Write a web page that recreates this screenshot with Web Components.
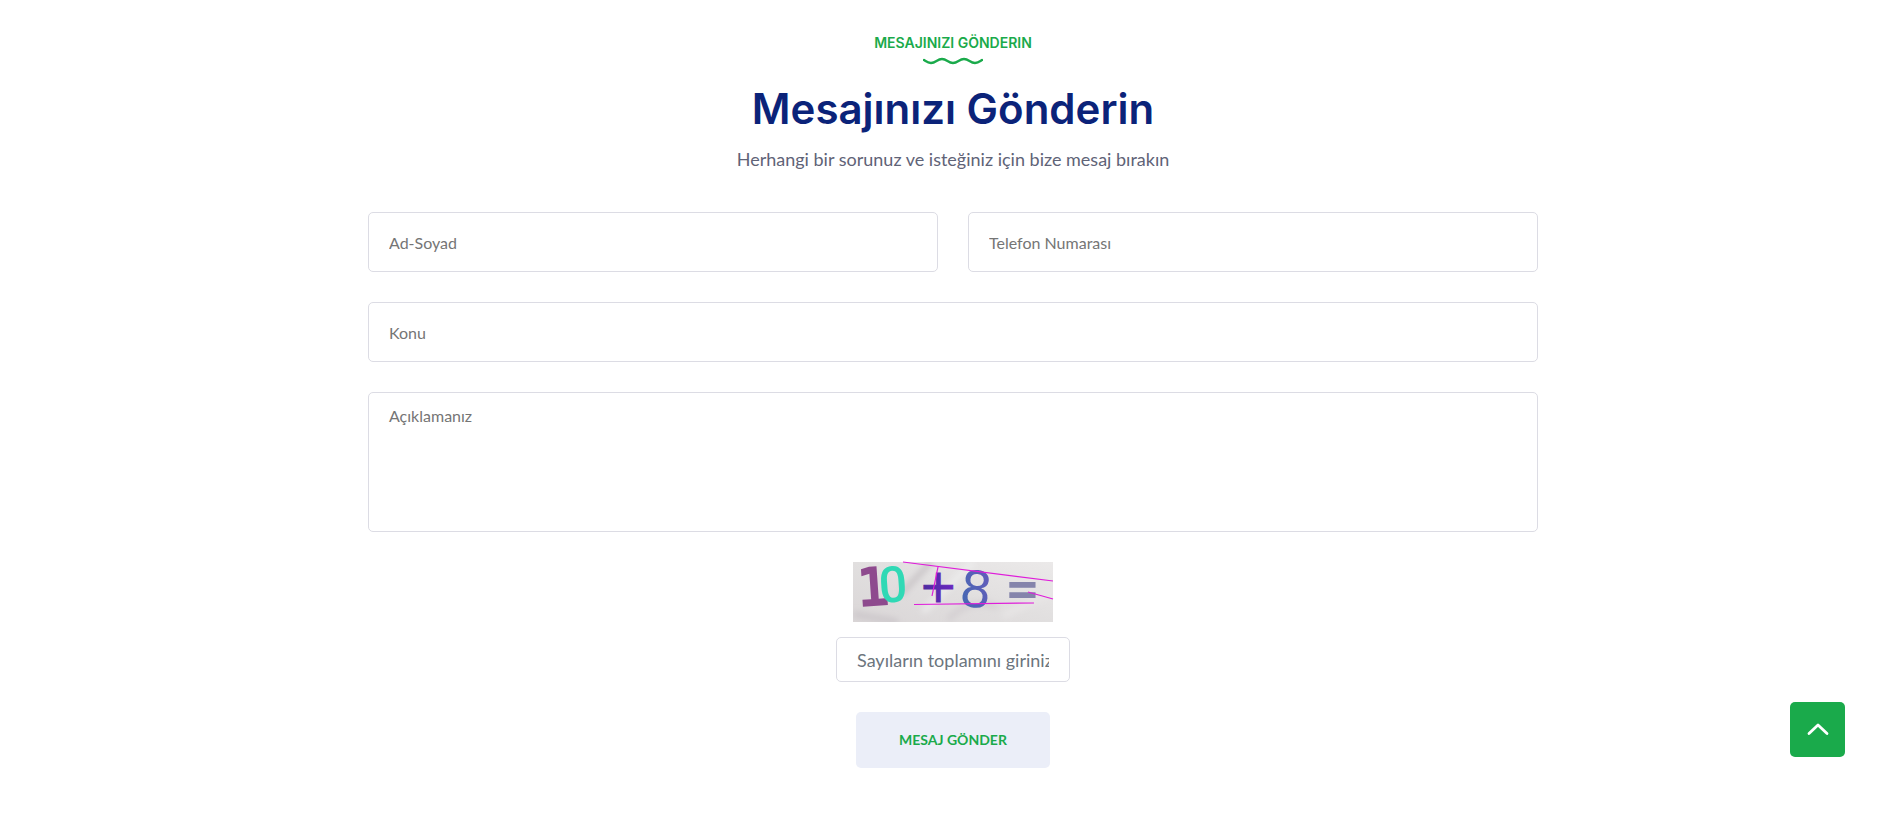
<!DOCTYPE html>
<html lang="tr">
<head>
<meta charset="utf-8">
<meta name="viewport" content="width=device-width, initial-scale=1">
<title>Mesajınızı Gönderin</title>
<style>
body { margin: 0; background: #fff; color: #5f6377; font-family: Lato, "Noto Sans", sans-serif; font-size: 18px; }
</style>
</head>
<body>
<contact-section>
  <section-heading>
    <span slot="eyebrow">MESAJINIZI GÖNDERIN</span>
    <span slot="title">Mesajınızı Gönderin</span>
    <span slot="lead">Herhangi bir sorunuz ve isteğiniz için bize mesaj bırakın</span>
  </section-heading>
  <contact-form></contact-form>
</contact-section>
<scroll-top></scroll-top>
<script>
const define = (name, html) => {
  const template = document.createElement('template');
  template.innerHTML = html;
  customElements.define(name, class extends HTMLElement {
    constructor() {
      super();
      this.attachShadow({ mode: 'open' }).append(template.content.cloneNode(true));
      const control = this.shadowRoot.querySelector('[data-control]');
      if (control) {
        control.placeholder = this.getAttribute('placeholder') || '';
        control.setAttribute('aria-label', control.placeholder);
      }
    }
  });
};

define('contact-section', `
<style>
:host { display: block; padding: 32px 24px 45px 28px; }
main { max-width: 1170px; margin: 0 auto; }
</style>
<main><slot></slot></main>`);

define('section-heading', `
<style>
:host { display: flex; flex-direction: column; align-items: center; text-align: center; margin-bottom: 38px; }
p, h2 { margin: 0; }
.eyebrow { font: 600 14px/22px Inter, sans-serif; color: #1aaa4b; }
svg { display: block; width: 60px; height: 8px; margin: 3px 0 20px; }
h2 { font: 600 42px/48px Inter, sans-serif; color: #0b2379; }
.lead { font-size: 18px; line-height: 30px; margin-top: 11px; }
</style>
<p class="eyebrow"><slot name="eyebrow"></slot></p>
<svg viewBox="0 0 60 8" fill="none" stroke="#1aaa4b" stroke-width="2.300" stroke-linecap="round" aria-hidden="true"><path d="M1 3C4 5 5 6 8 6C13 6 14 2 19 2C24 2 25 6 30 6C35 6 36 2 41 2C46 2 47 6 52 6C55 6 56 5 59 3"/></svg>
<h2><slot name="title"></slot></h2>
<p class="lead"><slot name="lead"></slot></p>`);

const fieldStyle = `
:host { display: block; }
input, textarea {
  display: block; box-sizing: border-box; width: 100%; margin: 0;
  border: 1px solid #dcdce4; border-radius: 5px; background: #fff;
  font-family: inherit; font-size: 16px; line-height: 24px; color: #5f6377; outline: none; resize: none;
}
::placeholder { color: #757575; opacity: 1; }
input:focus, textarea:focus { border-color: #1aaa4b; }`;

define('text-field', `<style>${fieldStyle}
input { height: 60px; padding: 1px 20px 0; }</style><input type="text" data-control>`);

define('text-area-field', `<style>${fieldStyle}
textarea { height: 140px; padding: 11px 20px; }</style><textarea data-control></textarea>`);

define('answer-field', `<style>${fieldStyle}
:host { width: 234px; }
input { height: 45px; padding: 1px 20px 0; font-size: 18px; }
::placeholder { color: #6c757d; }</style><input type="text" data-control>`);

define('captcha-image', `
<style>
:host { display: block; width: 200px; height: 60px; }
svg { display: block; overflow: visible; }
</style>
<svg width="200" height="60" viewBox="0 0 200 60" role="img" aria-label="10 + 8 =">
  <defs>
    <clipPath id="frame"><rect width="200" height="60"/></clipPath>
    <filter id="soft" x="-20%" y="-20%" width="140%" height="140%"><feGaussianBlur stdDeviation="3"/></filter>
    <linearGradient id="paper" x1="0" y1="1" x2="1" y2="0"><stop offset="0" stop-color="#dad6d7"/><stop offset=".5" stop-color="#e1dfdf"/><stop offset="1" stop-color="#ebe9e9"/></linearGradient>
    <linearGradient id="plus" x1="0" x2="1"><stop offset="0" stop-color="#4a2d9c"/><stop offset="1" stop-color="#6d27c4"/></linearGradient>
    <linearGradient id="eight" x1="0" y1="1" x2="1" y2="0"><stop offset="0" stop-color="#3d6cb0"/><stop offset="1" stop-color="#6a58bd"/></linearGradient>
  </defs>
  <rect width="200" height="60" fill="url(#paper)"/>
  <g clip-path="url(#frame)"><g filter="url(#soft)" fill="none" stroke-width="5">
    <path d="M78 0L48 32" stroke="#c6c1c4"/><path d="M0 52L45 60" stroke="#c9c4c8"/>
    <path d="M95 58Q115 35 145 45" stroke="#d2cdd0"/><path d="M120 0L70 50" stroke="#eeeeee"/>
    <path d="M150 54L200 30" stroke="#e9e7e7"/>
  </g></g>
  <text transform="translate(5 45) rotate(-4)" font-family="DejaVu Sans Mono" font-weight="700" font-size="54" fill="#8e4a8e">1</text>
  <text transform="translate(27 41) rotate(-4)" font-family="Roboto" font-weight="500" font-size="50" fill="#30d9b5">0</text>
  <text x="66" y="40" font-family="DejaVu Sans" font-size="46" fill="url(#plus)" stroke="url(#plus)" stroke-width="1">+</text>
  <text transform="translate(105 43) rotate(7)" font-family="DejaVu Sans" font-size="50" fill="url(#eight)">8</text>
  <text x="154" y="47" font-family="Open Sans" font-weight="700" font-size="54" fill="#8584ab">=</text>
  <g stroke="#df1cda" stroke-width="1.200" fill="none"><path d="M50 0L200 19"/><path d="M61 42.500L181 41"/><path d="M85 5L79 34"/><path d="M175 30L200 37"/></g>
</svg>`);

define('submit-button', `
<style>
:host { display: block; }
button { box-sizing: border-box; height: 56px; padding: 0 43px; border: 0; border-radius: 5px; background: #ebeef8; color: #1aaa4b; font: 700 14px/24px Lato, sans-serif; cursor: pointer; }
</style>
<button type="submit"><slot></slot></button>`);

define('contact-form', `
<style>
:host { display: block; }
form { display: grid; grid-template-columns: 1fr 1fr; gap: 30px; }
.wide { grid-column: 1 / -1; }
.captcha { display: flex; flex-direction: column; align-items: center; gap: 15px; }
submit-button { justify-self: center; }
</style>
<form>
  <text-field placeholder="Ad-Soyad"></text-field>
  <text-field placeholder="Telefon Numarası"></text-field>
  <text-field class="wide" placeholder="Konu"></text-field>
  <text-area-field class="wide" placeholder="Açıklamanız"></text-area-field>
  <div class="wide captcha"><captcha-image></captcha-image><answer-field placeholder="Sayıların toplamını giriniz"></answer-field></div>
  <submit-button class="wide">MESAJ GÖNDER</submit-button>
</form>`);

define('scroll-top', `
<style>
:host { position: fixed; right: 57px; bottom: 57px; }
button { display: grid; place-items: center; width: 55px; height: 55px; padding: 0; border: 0; border-radius: 5px; background: #1aaa4b; cursor: pointer; }
</style>
<button type="button" aria-label="Yukarı çık"><svg width="22" height="14" viewBox="0 0 22 14" fill="none" stroke="#fff" stroke-width="2.800" stroke-linecap="round" stroke-linejoin="round"><path d="M2 10.500L11 2L20 10.500"/></svg></button>`);
</script>
</body>
</html>
